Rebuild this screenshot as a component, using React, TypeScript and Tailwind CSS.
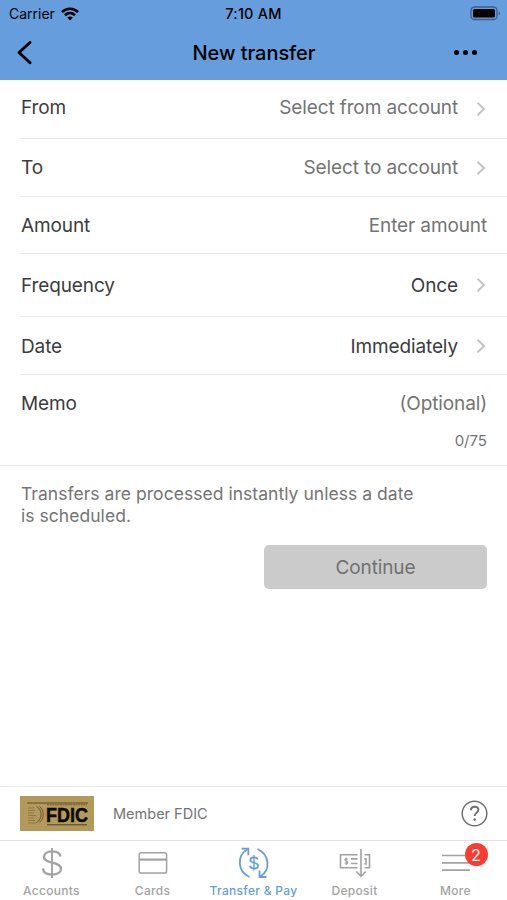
import { useState } from 'react'
import type { ReactNode } from 'react'
import { clsx } from 'clsx'

interface Field {
  label: string
  value: string
  chevron?: string
  filled?: boolean
  className: string
}

const FIELDS: Field[] = [
  { label: 'From', value: 'Select from account', chevron: 'mt-[2px]', className: 'h-[59px] pb-[2px]' },
  { label: 'To', value: 'Select to account', chevron: '-mt-px', className: 'h-[58px] pt-px' },
  { label: 'Amount', value: 'Enter amount', className: 'h-[57px] pt-[2px]' },
  { label: 'Frequency', value: 'Once', chevron: '-mt-[2px]', filled: true, className: 'h-[63px] pt-[2px]' },
  { label: 'Date', value: 'Immediately', chevron: '-mt-[3px]', filled: true, className: 'h-[58px] pt-[3px]' },
]

function WifiIcon() {
  return (
    <svg width="18" height="14" viewBox="0 0 18 14" fill="none" stroke="#000" strokeWidth="2.7">
      <path d="M1 5.1C5.6.6 12.4.6 17 5.1" />
      <path d="M4 8.2c2.9-2.8 7.1-2.8 10 0" />
      <path d="M9 13.4 6.2 10.6c1.6-1.4 4-1.4 5.6 0z" fill="#000" stroke="none" />
    </svg>
  )
}

function BatteryIcon() {
  return (
    <svg width="31" height="15" viewBox="0 0 31 15" fill="none">
      <rect x="1" y="1" width="26" height="12.5" rx="3.6" stroke="#000" strokeOpacity=".4" strokeWidth="1.3" />
      <rect x="3" y="3" width="22" height="8.5" rx="1.6" fill="#000" />
      <path d="M28.6 5.4c1.9.5 1.9 3.2 0 3.7z" fill="#000" fillOpacity=".4" />
    </svg>
  )
}

function Chevron({ className }: { className?: string }) {
  return (
    <svg width="10" height="16" viewBox="0 0 10 16" fill="none" stroke="#c4c4c6" strokeWidth="2" className={clsx('ml-[18px] mr-px', className)}>
      <path d="M1.5 1.8 8 8l-6.5 6.2" />
    </svg>
  )
}

function DollarIcon() {
  return (
    <svg width="22" height="32" viewBox="0 0 22 32" fill="none" stroke="currentColor" strokeWidth="2.3">
      <path d="M11 1v30" strokeWidth="1.9" />
      <path d="M19.5 9.5C19 6.3 15.5 4.400 11 4.400c-4.700 0-8 2.200-8 5.500 0 7.300 17 4.200 17 11.900 0 3.600-3.800 5.800-8.900 5.800-5.200 0-8.800-2.300-9.200-6.200" />
    </svg>
  )
}

function CardIcon() {
  return (
    <svg width="30" height="24" viewBox="0 0 30 24" fill="none" stroke="currentColor" strokeWidth="1.5">
      <rect x="1.2" y="1.7" width="27.4" height="20.4" rx="2.2" />
      <path d="M1 8.6h28" strokeWidth="2.2" />
    </svg>
  )
}

function TransferIcon() {
  return (
    <svg width="32" height="32" viewBox="0 0 32 32" fill="none" stroke="currentColor" strokeWidth="1.8">
      <path d="M11.5 30C-.5 24.5-1.5 9 9.3 2.3" />
      <path d="M3.5 1.7h6.8v6.5" />
      <path d="M19.5 2C31.5 7.5 33 23 22.3 29.5" />
      <path d="M21.5 23.5v6.500h7" />
      <path d="M16 8v15.5" strokeWidth="1.4" />
      <path d="M19.800 12.500c-.5-1.500-1.900-2.200-3.800-2.200-2.200 0-3.700 1-3.700 2.600 0 3.600 7.800 2 7.800 5.800 0 1.700-1.600 2.800-4 2.800-2.300 0-3.900-1-4.200-2.800" strokeWidth="1.7" />
    </svg>
  )
}

function DepositIcon() {
  return (
    <svg width="32" height="30" viewBox="0 0 32 30" fill="none" stroke="currentColor" strokeWidth="1.6">
      <path d="M18.5 6.8H1.5v13h17M25.5 6.8h5v13h-5" />
      <path d="M22 1v27M17.3 23.5l4.7 4.800 4.700-4.800" />
      <path d="M12 10.900h6.500M12 15.500h6.500M25.500 10.900h1.500v5h-1.500" />
      <path d="M8.800 11.300c-3-1.200-4 .8-1.500 1.700 2.700 1 1.600 3.200-1.600 2M7.200 9.500v7.500" strokeWidth="1.2" />
    </svg>
  )
}

function MenuIcon() {
  return (
    <svg width="30" height="20" viewBox="0 0 30 20" stroke="currentColor" strokeWidth="1.7">
      <path d="M1 2.5h28M1 9.9h28M1 17.2h28" />
    </svg>
  )
}

function FdicBadge() {
  return (
    <svg width="74" height="35" viewBox="0 0 74 35" fill="none">
      <rect width="74" height="35" fill="#b3995b" />
      <path d="M7 7h61" stroke="#57492c" strokeWidth="1" />
      <path d="M27 8.8h40" stroke="#6b5a35" strokeWidth="1" strokeDasharray="2 .6" />
      <path d="M27 28.8h40" stroke="#4b3e25" strokeWidth="1" />
      <path d="M8 12h6M8 14.500h7M8 17h6M8 19.500h8M8 22h6M8 24.500h7M8 27h8" stroke="#7e6a40" strokeWidth=".7" />
      <path d="M16.5 10.5c6 3 6 13 0 16M19.500 10.500c5 4 5 12 0 16" stroke="#6d5a34" strokeWidth="1" />
      <text x="26" y="25.6" fontFamily="Liberation Sans, sans-serif" fontSize="20" fontWeight="700" textLength="42" lengthAdjust="spacingAndGlyphs" stroke="#0b0a08" strokeWidth=".5" fill="#0b0a08">
        FDIC
      </text>
    </svg>
  )
}

interface Tab {
  label: string
  icon: ReactNode
  badge?: number
}

const TABS: Tab[] = [
  { label: 'Accounts', icon: <DollarIcon /> },
  { label: 'Cards', icon: <CardIcon /> },
  { label: 'Transfer & Pay', icon: <TransferIcon /> },
  { label: 'Deposit', icon: <DepositIcon /> },
  { label: 'More', icon: <MenuIcon />, badge: 2 },
]

export default function App() {
  const [active, setActive] = useState('Transfer & Pay')

  return (
    <div className="flex h-[900px] w-[507px] flex-col overflow-hidden bg-white font-['Inter',sans-serif] text-[#3c3c3e]">
      {/* Header */}
      <header className="h-20 shrink-0 bg-[#669ddd] text-black">
        <div className="grid h-[27px] grid-cols-3 items-center px-[7px]">
          <div className="flex items-center gap-[6px] pl-[2px] text-[14px]">
            <span>Carrier</span>
            <WifiIcon />
          </div>
          <span className="text-center text-[14.5px] font-medium tracking-[.2px]">7:10 AM</span>
          <div className="-mr-px flex justify-end">
            <BatteryIcon />
          </div>
        </div>
        <div className="grid h-[51px] grid-cols-[60px_1fr_60px] items-center">
          <button aria-label="Back" className="pl-4">
            <svg width="16" height="24" viewBox="0 0 16 24" fill="none" stroke="#000" strokeWidth="2.9" strokeLinecap="round" strokeLinejoin="round">
              <path d="M14 1.500 3 11.500l11 10.200" />
            </svg>
          </button>
          <h1 className="pl-px text-center text-[20px] font-medium tracking-[-.05px]">New transfer</h1>
          <button aria-label="Options" className="flex justify-end gap-[4px] pr-[30px]">
            <i className="size-[5px] rounded-full bg-black" />
            <i className="size-[5px] rounded-full bg-black" />
            <i className="size-[5px] rounded-full bg-black" />
          </button>
        </div>
      </header>

      {/* Form */}
      <main className="flex-1 text-[19px] tracking-[-.12px]">
        {FIELDS.map(f => (
          <div key={f.label} className={clsx('ml-5 flex items-center justify-between border-b border-[#ebebeb] pl-px pr-5', f.className)}>
            <span>{f.label}</span>
            <div className={clsx('flex items-center', !f.filled && 'text-[#747474]')}>
              <span>{f.value}</span>
              {f.chevron && <Chevron className={f.chevron} />}
            </div>
          </div>
        ))}
        <div className="h-[91px] border-b border-[#ebebeb] pl-[21px] pr-5 pt-[15px]">
          <div className="flex justify-between">
            <span>Memo</span>
            <span className="text-[#747474]">(Optional)</span>
          </div>
          <p className="mt-[12px] text-right text-[15px] leading-5 tracking-normal text-[#747474]">0/75</p>
        </div>
        <p className="w-[430px] pl-[21px] pt-[17px] text-[17.5px] leading-[22px] tracking-[.04px] text-[#747474]">
          Transfers are processed instantly unless a date<br />is scheduled.
        </p>
        <div className="flex justify-end pr-5 pt-[18px]">
          <button disabled className="h-11 w-[223px] rounded-[5px] bg-[#cbcbcb] pt-[2px] text-[#707070]">
            Continue
          </button>
        </div>
      </main>

      {/* FDIC notice */}
      <div className="flex h-[54px] shrink-0 items-center border-t border-[#ebebeb] pl-5 pr-[19px]">
        <FdicBadge />
        <span className="ml-[19px] text-[14.5px] text-[#747474]">Member FDIC</span>
        <button aria-label="Help" className="ml-auto">
          <svg width="27" height="27" viewBox="0 0 27 27" fill="none" stroke="#707070" strokeWidth="1.5">
            <circle cx="13.5" cy="13.5" r="12.3" />
            <path d="M9.800 10.300c.2-2.300 1.700-3.600 3.900-3.600s3.700 1.200 3.700 3.100c0 3-3.700 2.900-3.700 6.100" strokeWidth="1.9" />
            <circle cx="13.7" cy="19.6" r="1.3" fill="#707070" stroke="none" />
          </svg>
        </button>
      </div>

      {/* Tab bar */}
      <nav className="grid h-[60px] shrink-0 grid-cols-5 border-t border-[#e2e2e2] px-px">
        {TABS.map(t => (
          <button
            key={t.label}
            onClick={() => setActive(t.label)}
            className={clsx('flex flex-col items-center pt-[6px]', active === t.label ? 'text-[#669ddd]' : 'text-[#a2a2a2]')}
          >
            <span className="relative flex h-8 items-center">
              {t.icon}
              {t.badge && (
                <span className="absolute -right-[17px] -top-[4px] flex size-[23px] items-center justify-center rounded-full bg-[#fb3b32] text-[16px] text-white">
                  {t.badge}
                </span>
              )}
            </span>
            <span className="mt-[3px] whitespace-nowrap text-[12px] font-medium leading-[18px] tracking-[.3px]">{t.label}</span>
          </button>
        ))}
      </nav>
    </div>
  )
}
